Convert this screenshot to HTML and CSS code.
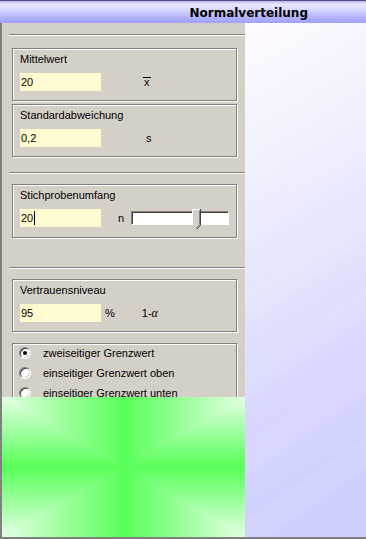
FILE: index.html
```html
<!DOCTYPE html>
<html lang="de">
<head>
  <meta charset="UTF-8">
  <meta name="viewport" content="width=device-width, initial-scale=1.0">
  <title>Normalverteilung</title>
  <link rel="stylesheet" href="styles.css">
</head>
<body>
  <div class="titlebar">
    <span class="title">Normalverteilung</span>
  </div>

  <div class="main">
    <div class="left">
      <div class="panel">
        <div class="sep sep-first"></div>

        <div class="frame frame-mean">
          <div class="caption">Mittelwert</div>
          <div class="row">
            <div class="field">20</div>
            <span class="unit unit-mean"><span class="bar">x</span></span>
          </div>
        </div>

        <div class="frame frame-sd">
          <div class="caption">Standardabweichung</div>
          <div class="row">
            <div class="field">0,2</div>
            <span class="unit unit-sd">s</span>
          </div>
        </div>

        <div class="sep sep-second"></div>

        <div class="frame frame-n">
          <div class="caption">Stichprobenumfang</div>
          <div class="row">
            <div class="field">20<span class="caret"></span></div>
            <span class="unit unit-n">n</span>
            <div class="track">
              <svg class="thumb" width="9" height="21" viewBox="0 0 9 21">
                <path d="M0.5 0.5 H8.5 V16 L4.5 20 L0.5 16 Z" fill="#d4d0c8"></path>
                <path d="M0.5 16 V0.5 H8" fill="none" stroke="#ffffff"></path>
                <path d="M8.5 0 V16.2 L4.5 20.3" fill="none" stroke="#404040"></path>
                <path d="M7.5 1 V15.8 L4.5 18.8" fill="none" stroke="#808080"></path>
              </svg>
            </div>
          </div>
        </div>

        <div class="sep sep-third"></div>

        <div class="frame frame-level">
          <div class="caption">Vertrauensniveau</div>
          <div class="row">
            <div class="field">95</div>
            <span class="unit unit-pct">%</span>
            <span class="unit unit-alpha">1-<i>α</i></span>
          </div>
        </div>

        <div class="frame frame-radios">
          <label class="option"><span class="radio checked"></span>zweiseitiger Grenzwert</label>
          <label class="option"><span class="radio"></span>einseitiger Grenzwert oben</label>
          <label class="option"><span class="radio"></span>einseitiger Grenzwert unten</label>
        </div>
      </div>

      <div class="green"></div>
    </div>

    <div class="side"></div>
  </div>
</body>
</html>
```

FILE: styles.css
```css
:root {
  --face: #d4d0c8;
  --shadow: #808080;
  --dark: #404040;
  --light: #ffffff;
  --field: #fffbd0;
}

* {
  margin: 0;
  padding: 0;
  box-sizing: border-box;
}

body {
  width: 366px;
  height: 539px;
  overflow: hidden;
  font-family: "Liberation Sans", Arial, sans-serif;
  font-size: 11px;
  color: #000;
  background: var(--face);
}

/* Titelleiste */
.titlebar {
  height: 23px;
  display: flex;
  align-items: center;
  justify-content: flex-end;
  padding: 2px 58px 0 0;
  border-top: 1px solid #505080;
  background: linear-gradient(#b4b4f0 0, #e6e6ff 3px, #dadaff 8px, #b0b0ff 17px, #a2a2ff 22px);
}

.title {
  font-family: "DejaVu Sans", sans-serif;
  font-weight: bold;
  font-size: 12px;
  line-height: 14px;
}

.main {
  display: flex;
  height: 516px;
  border-left: 2px solid var(--shadow);
  border-bottom: 2px solid var(--shadow);
}

.left {
  width: 243px;
  display: flex;
  flex-direction: column;
}

.panel {
  height: 374px;
  overflow: hidden;
  background: var(--face);
}

.green {
  height: 140px;
  background-image:
    linear-gradient(to right, #e4ffe4 0%, #58ff58 50.5%, #e4ffe4 100%),
    linear-gradient(to bottom, #e4ffe4 0%, #58ff58 50%, #e4ffe4 100%);
  background-blend-mode: darken;
}

.side {
  flex: 1;
  background:
    repeating-linear-gradient(145deg, rgba(255, 255, 255, 0) 0 36px, rgba(255, 255, 255, 0.06) 36px 62px),
    linear-gradient(150deg, #fffaff 0%, #f2f2fe 22%, #e6e6fd 45%, #d6d6ff 70%, #ccccff 100%);
}

/* Trennlinien */
.sep {
  margin-left: 7px;
  height: 2px;
  border-top: 1px solid var(--shadow);
  border-bottom: 1px solid var(--light);
}

.sep-first { margin-top: 11px; }
.sep-second { margin-top: 15px; }
.sep-third { margin-top: 29px; }

/* Rahmen */
.frame {
  margin-left: 10px;
  width: 225px;
  height: 53px;
  padding: 4px 0 0 7px;
  border: 1px solid var(--shadow);
  box-shadow: inset 1px 1px 0 var(--light), 1px 1px 0 var(--light);
}

.frame-mean { margin-top: 12px; }
.frame-sd { margin-top: 3px; }
.frame-n { margin-top: 10px; height: 54px; }
.frame-level { margin-top: 10px; }

.caption {
  line-height: 13px;
}

.row {
  display: flex;
  align-items: center;
  margin-top: 7px;
  height: 18px;
}

.field {
  width: 81px;
  height: 18px;
  line-height: 18px;
  padding-left: 1px;
  background: var(--field);
  display: flex;
  align-items: center;
}

.caret {
  width: 1px;
  height: 14px;
  margin-left: 1px;
  background: #000;
}

.unit-mean { margin-left: 42px; }
.unit-sd { margin-left: 45px; }
.unit-n { margin-left: 17px; }
.unit-pct { margin-left: 4px; }
.unit-alpha { margin-left: 27px; }

.bar {
  display: inline-block;
  border-top: 1px solid #000;
  line-height: 8px;
  padding: 0 1px;
  margin-top: 1px;
}

.unit-alpha i {
  font-family: "Liberation Serif", serif;
  font-size: 12px;
}

/* Schieberegler */
.track {
  position: relative;
  margin-left: 7px;
  width: 98px;
  height: 14px;
  background: var(--light);
  border: 1px solid;
  border-color: var(--shadow) var(--light) var(--light) var(--shadow);
  box-shadow: inset 1px 1px 0 var(--dark);
}

.thumb {
  position: absolute;
  left: 60px;
  top: -3px;
}

/* Optionsfelder */
.frame-radios {
  margin-top: 11px;
  height: 80px;
  padding: 0 0 0 6px;
  display: flex;
  flex-direction: column;
  gap: 2px;
}

.option {
  display: flex;
  align-items: center;
  height: 18px;
  gap: 12px;
}

.radio {
  position: relative;
  width: 12px;
  height: 12px;
  border-radius: 50%;
  background: var(--light);
  border: 1px solid;
  border-color: var(--shadow) var(--light) var(--light) var(--shadow);
  box-shadow: inset 1px 1px 0 var(--dark), inset -1px -1px 0 var(--face);
}

.radio.checked::after {
  content: "";
  position: absolute;
  left: 3px;
  top: 3px;
  width: 4px;
  height: 4px;
  border-radius: 50%;
  background: #000;
}
```
